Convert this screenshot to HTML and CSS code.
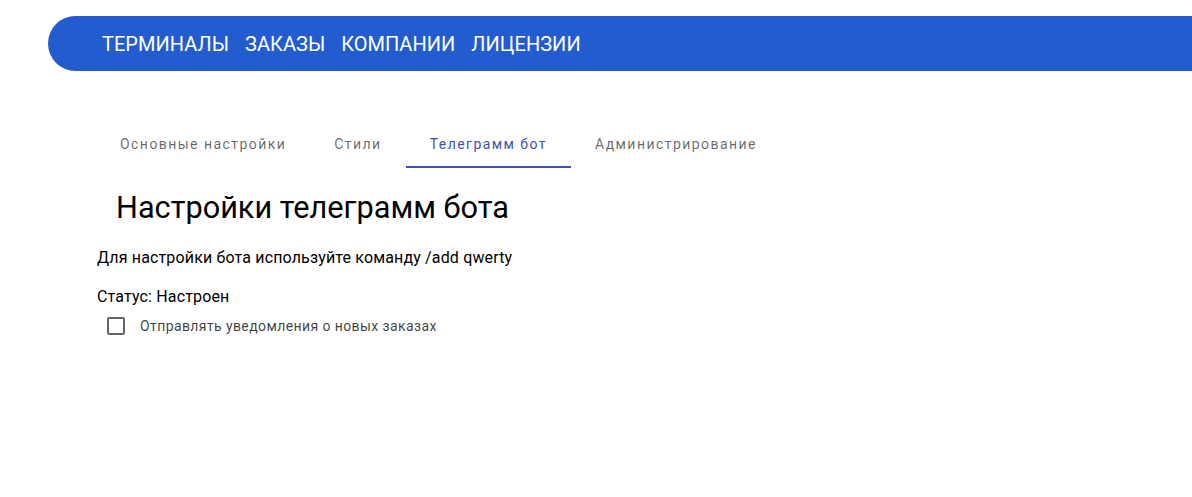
FILE: index.html
```html
<!DOCTYPE html>
<html lang="ru">
<head>
<meta charset="utf-8">
<link rel="stylesheet" href="styles.css">
</head>
<body>
<header class="topbar">
  <nav class="topnav">
    <a class="topnav-item">ТЕРМИНАЛЫ</a>
    <a class="topnav-item">ЗАКАЗЫ</a>
    <a class="topnav-item">КОМПАНИИ</a>
    <a class="topnav-item">ЛИЦЕНЗИИ</a>
  </nav>
</header>
<main class="content">
  <div class="tabs">
    <div class="tab">Основные настройки</div>
    <div class="tab">Стили</div>
    <div class="tab active">Телеграмм бот</div>
    <div class="tab">Администрирование</div>
  </div>
  <section class="panel">
    <h1 class="title">Настройки телеграмм бота</h1>
    <p class="text hint">Для настройки бота используйте команду /add qwerty</p>
    <p class="text status">Статус: Настроен</p>
    <label class="check">
      <span class="box"></span>
      <span class="check-label">Отправлять уведомления о новых заказах</span>
    </label>
  </section>
</main>
</body>
</html>
```

FILE: styles.css
```css
* { box-sizing: border-box; }
body {
  margin: 0;
  font-family: Roboto, "Liberation Sans", sans-serif;
  background: #fff;
  color: #000;
}
.topbar {
  margin: 16px 0 0 48px;
  height: 55px;
  background: #225cce;
  border-radius: 28px 0 0 28px;
  display: flex;
  align-items: center;
  padding-left: 54px;
}
.topnav { display: flex; gap: 16px; }
.topnav-item {
  color: #fff;
  font-size: 20px;
  letter-spacing: 0.03px;
  line-height: 1;
}
.content { padding: 50px 0 0 96px; }
.tabs { display: flex; height: 48px; }
.tab {
  padding: 0 24px;
  height: 47px;
  display: flex;
  align-items: center;
  font-size: 14px;
  letter-spacing: 1.45px;
  color: rgba(0,0,0,0.6);
  border-bottom: 2px solid transparent;
}
.tab.active {
  color: #3f51b5;
  border-bottom-color: #3f51b5;
}
.panel { padding-top: 19px; }
.title {
  margin: 0 0 0 20px;
  font-size: 30.7px;
  font-weight: 400;
  line-height: 40px;
}
.text {
  margin: 0;
  font-size: 16px;
  line-height: 20px;
  letter-spacing: 0.15px;
  margin-left: 1px;
}
.hint { margin-top: 20px; }
.status { margin-top: 19px; }
.check {
  display: flex;
  align-items: center;
  margin-top: 10px;
  padding-left: 11px;
}
.box {
  width: 18px;
  height: 18px;
  border: 2px solid #666;
  border-radius: 2px;
}
.check-label {
  margin-left: 15px;
  font-size: 14px;
  letter-spacing: 0.4px;
  color: rgba(0,0,0,0.75);
}
```
